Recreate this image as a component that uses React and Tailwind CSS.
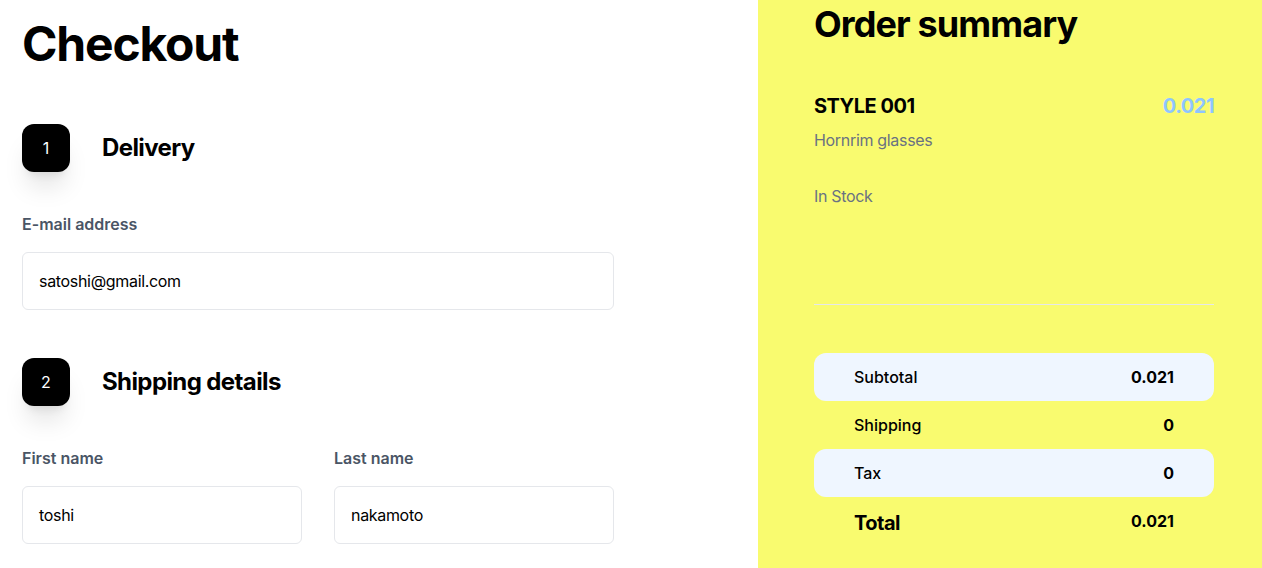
import React from 'react'

const font = { fontFamily: 'Inter, "Noto Sans", sans-serif' }

function Step({ n, title }) {
  return (
    <div className="flex items-center gap-8">
      <div className="w-12 h-12 rounded-xl bg-black text-white flex items-center justify-center text-base shadow-xl">
        {n}
      </div>
      <h2 className="text-2xl font-bold tracking-tight text-black">{title}</h2>
    </div>
  )
}

function Field({ label, value, className = '' }) {
  return (
    <div className={className}>
      <label className="block text-base font-semibold text-gray-600">{label}</label>
      <div className="mt-4 h-[58px] border border-gray-200 rounded-md px-4 flex items-center text-base tracking-[-0.02em] text-black bg-white">
        {value}
      </div>
    </div>
  )
}

function SumRow({ label, value, shaded, total }) {
  return (
    <div className={`h-12 px-10 flex items-center justify-between rounded-xl ${shaded ? 'bg-blue-50' : ''}`}>
      <span className={total ? 'text-xl font-bold tracking-tight text-black translate-y-[2px]' : 'text-base font-medium text-black'}>{label}</span>
      <span className="text-base font-bold text-black">{value}</span>
    </div>
  )
}

export default function App() {
  return (
    <div className="flex w-[1262px] h-[568px] overflow-hidden bg-white" style={font}>
      {/* Left: checkout form */}
      <div className="w-[758px] shrink-0 pl-[22px] pr-[144px]">
        <h1 className="mt-5 text-5xl font-bold tracking-tight text-black leading-none">Checkout</h1>

        <div className="mt-14">
          <Step n="1" title="Delivery" />
          <Field label="E-mail address" value="satoshi@gmail.com" className="mt-10" />
        </div>

        <div className="mt-12">
          <Step n="2" title="Shipping details" />
          <div className="mt-10 grid grid-cols-2 gap-8">
            <Field label="First name" value="toshi" />
            <Field label="Last name" value="nakamoto" />
          </div>
        </div>
      </div>

      {/* Right: order summary */}
      <div className="flex-1 bg-[#f9fb6f] pl-14 pr-12 pt-1">
        <h2 className="text-4xl font-bold tracking-tight text-black">Order summary</h2>

        <div className="mt-12 flex items-center justify-between">
          <span className="text-xl font-bold tracking-tight text-black">STYLE 001</span>
          <span className="text-xl font-bold tracking-tight text-blue-300">0.021</span>
        </div>
        <p className="mt-2 text-base tracking-[-0.02em] text-gray-500">Hornrim glasses</p>
        <p className="mt-8 text-base tracking-[-0.02em] text-gray-500">In Stock</p>

        <div className="mt-24 h-px bg-gray-200" />

        <div className="mt-12">
          <SumRow label="Subtotal" value="0.021" shaded />
          <SumRow label="Shipping" value="0" />
          <SumRow label="Tax" value="0" shaded />
          <SumRow label="Total" value="0.021" total />
        </div>
      </div>
    </div>
  )
}
